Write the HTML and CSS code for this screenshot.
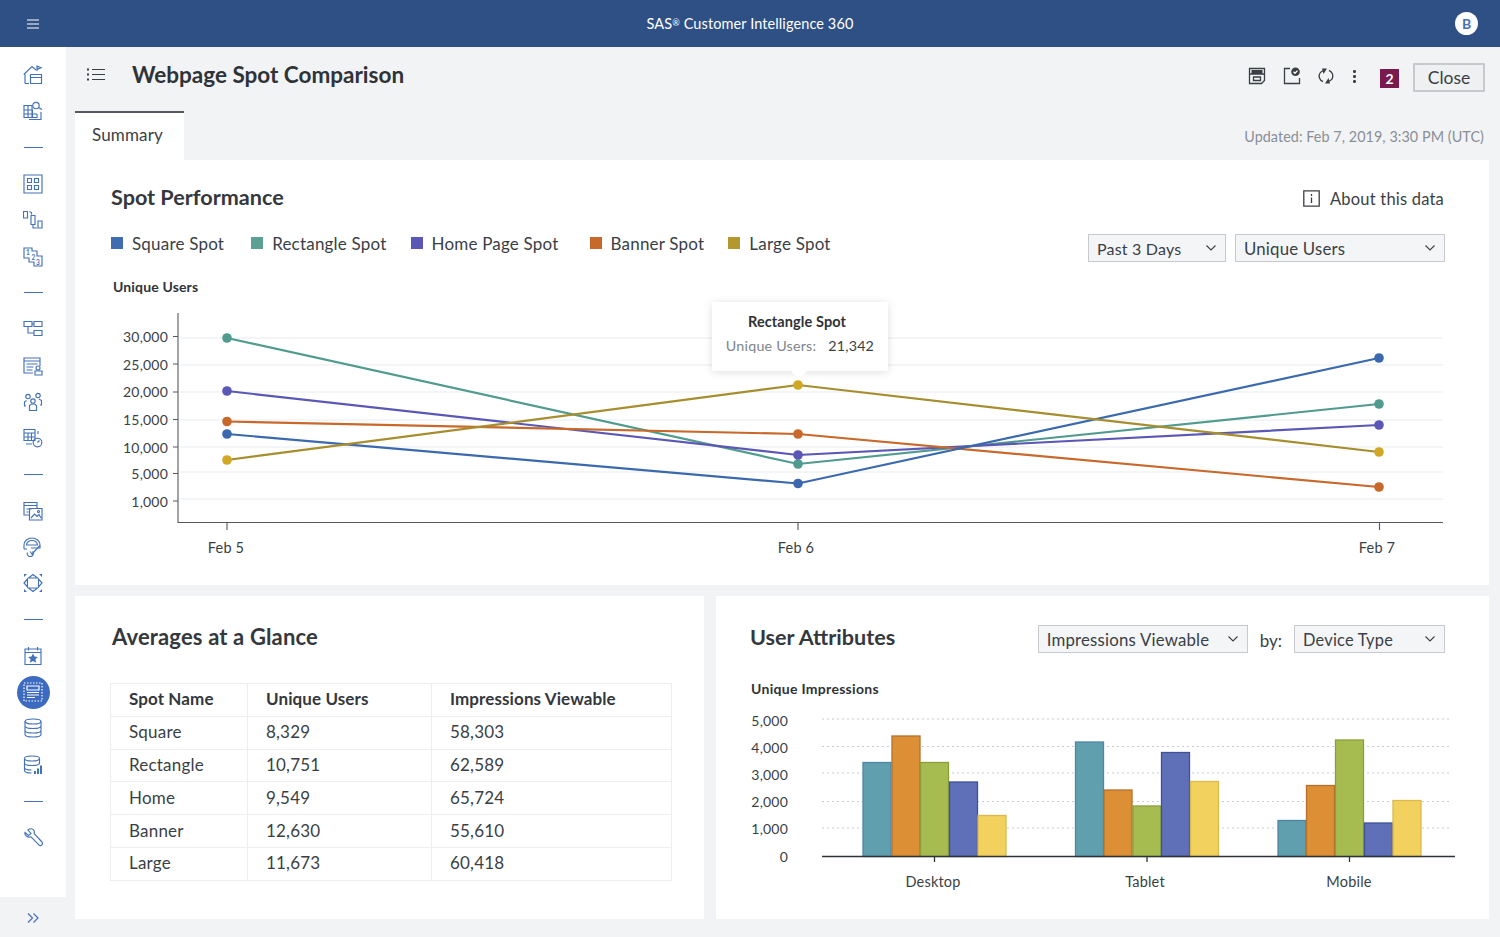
FILE: index.html
```html
<!DOCTYPE html>
<html lang="en">
<head>
<meta charset="utf-8">
<title>Webpage Spot Comparison</title>
<link rel="stylesheet" href="styles.css">
</head>
<body>
<div class="app">
  <header class="topbar">
    <div class="burger"><svg width="12" height="10" viewBox="0 0 12 10"><path d="M0 1h12M0 5h12M0 9h12" stroke="#fff" stroke-width="1.2" fill="none"/></svg></div>
    <div class="product">SAS<span class="reg">®</span> Customer Intelligence 360</div>
    <div class="avatar">B</div>
  </header>
  <div class="main">
    <nav class="sidebar">
      <div class="rail">
        <div class="nav-item"><svg class="ico" viewBox="0 0 20 20"><path d="M2 18.500V9.500M.8 9.500L9 1.500l4 3.500M14 6V1.200l4 1.600-4 1.600M2 18.500h4M7.500 9.500h11v9h-11zM7.500 12.500h11"/></svg></div>
        <div class="nav-item"><svg class="ico" viewBox="0 0 20 20"><path d="M1 4.500h8v12H1zM1 9h9M1 13h13M5 4.500v12M9.500 9v7.500M14 13v3.500H1M18 11v7.500H6"/><circle cx="13" cy="4.500" r="3.200"/><path d="M15.500 6.500l3.500 2"/></svg></div>
        <div class="nav-sep"></div>
        <div class="nav-item"><svg class="ico" viewBox="0 0 20 20"><path d="M1 1h18v18H1zM4.500 4.500h4v4h-4zM11.500 4.500h4v4h-4zM4.500 11.500h4v4h-4zM11.500 11.500h4v4h-4z"/></svg></div>
        <div class="nav-item"><svg class="ico" viewBox="0 0 20 20"><path d="M.500 1.500h4v6.500h-4zM8 5.500h4v9H8zM15 11h4v7h-4zM6.500 1.500l2 1v2M10 15v3h4"/></svg></div>
        <div class="nav-item"><svg class="ico" viewBox="0 0 20 20"><path d="M1 1h8v3h5v5h5v10h-8v-4H6v-4H1z"/><text class="ico-num" x="3" y="8">1</text><text class="ico-num" x="8.500" y="13">2</text><text class="ico-num" x="13" y="18">3</text></svg></div>
        <div class="nav-sep"></div>
        <div class="nav-item"><svg class="ico" viewBox="0 0 20 20"><path d="M1 2.500h8v5H1zM11 2.500h8v5h-8zM11 11.500h8v5h-8zM9 5h2M5 7.500V14h6"/></svg></div>
        <div class="nav-item"><svg class="ico" viewBox="0 0 20 20"><path d="M10 17H1V2h16v8M1 5h16M3.500 8h11M3.500 11h7M3.500 14h6"/><circle cx="15" cy="12" r="2"/><path d="M12 19v-4h7v4z"/></svg></div>
        <div class="nav-item"><svg class="ico" viewBox="0 0 20 20"><circle cx="5" cy="4.500" r="2.200"/><circle cx="15" cy="3.500" r="2.200"/><circle cx="10" cy="9" r="2.200"/><path d="M3 14H1.500V10l2-1.500M17 13h1.500V8.500L16 7M6.500 18.500v-5l2-1.500h3l2 1.500v5z"/></svg></div>
        <div class="nav-item"><svg class="ico" viewBox="0 0 20 20"><path d="M1 1.500h11v11H1zM1 5h11M5 5v7.500M8.500 5v7.500M1 9h11M15 3v3M3 16h6"/><circle cx="14.500" cy="14.500" r="4.300"/><path d="M14.500 14.500l2-2"/></svg></div>
        <div class="nav-sep"></div>
        <div class="nav-item"><svg class="ico" viewBox="0 0 20 20"><path d="M6 14H1V1.500h13V7M1 4.500h13M3.500 8h5M3.500 11h2M6.500 7.500H19V19H6.500zM8 17l3.500-4 2.500 2.500 2-2 2 3.500"/><circle cx="15.500" cy="10.500" r="1"/></svg></div>
        <div class="nav-item"><svg class="ico" viewBox="0 0 20 20"><path d="M1 12V8a8 7 0 0 1 16 0v3H8M1 12h3M3.500 8a5.500 4.500 0 0 1 11 0z"/><path d="M4.500 15.500a3 3 0 1 0 5-1M7 14.500l2 2.500 8-8.500"/></svg></div>
        <div class="nav-item"><svg class="ico" viewBox="0 0 20 20"><path d="M10 1.500L5.500 5h9zM10 18.500L5.500 15h9zM1 10l3.500-4v8zM19 10l-3.500-4v8z"/><path class="ico-fill" d="M1 1h3L1 4zM19 1h-3l3 3zM1 19h3l-3-3zM19 19h-3l3-3z"/></svg></div>
        <div class="nav-sep"></div>
        <div class="nav-item"><svg class="ico" viewBox="0 0 20 20"><path d="M2 3h16v15.500H2zM2 6.500h16M5.500 1v3.500M14.500 1v3.500"/><path class="ico-fill" d="M10 7.500l1.500 3.100 3.400.4-2.500 2.300.7 3.400-3.100-1.700-3.100 1.700.7-3.400L5.100 11l3.400-.4z"/></svg></div>
        <div class="nav-item nav-active"><div class="disc"><svg class="ico-white" width="20" height="20" viewBox="0 0 20 20"><path class="dotted" d="M1 1h18v18H1z"/><path d="M4 4h12v4H4zM4 10.500h12M4 13h12M4 15.500h8"/></svg></div></div>
        <div class="nav-item"><svg class="ico" viewBox="0 0 20 20"><ellipse cx="10" cy="3.500" rx="8" ry="2.500"/><path d="M2 3.500v13c0 1.400 3.600 2.500 8 2.500s8-1.100 8-2.500v-13M2 8c0 1.400 3.600 2.500 8 2.500s8-1.100 8-2.500M2 12.500c0 1.400 3.600 2.500 8 2.500s8-1.100 8-2.500"/></svg></div>
        <div class="nav-item"><svg class="ico" viewBox="0 0 20 20"><ellipse cx="9" cy="3.500" rx="7.500" ry="2.500"/><path d="M1.500 3.500v12c0 1.400 3 2.500 7 2.500M16.500 3.500V9M1.500 8c0 1.400 3.400 2.500 7.500 2.500s7.500-1.100 7.500-2.500M1.500 12.500c0 1.400 3 2.500 7 2.500"/><path class="ico-fill" d="M11 16h2v3h-2zM14 13.500h2V19h-2zM17 10.500h2V19h-2z"/></svg></div>
        <div class="nav-sep"></div>
        <div class="nav-item"><svg class="ico" viewBox="0 0 20 20"><path d="M2 5.500L5.500 8.500 8 6.500 5 3C7 1 10 1.500 11 3.500c.6 1.200.4 2.500.2 3.200l7.800 8.300c.8 1 .6 2-.2 2.900-.9.800-2 .9-2.900 0L8 9.800C6.500 10.300 4.500 10 3.200 9 2 8 1.700 6.700 2 5.500z"/></svg></div>
      </div>
      <div class="expand"><svg width="12" height="10" viewBox="0 0 12 10"><path d="M1 .5l4.500 4.500L1 9.500M6.500 .5L11 5l-4.500 4.500" fill="none" stroke="#4472b8" stroke-width="1.200"/></svg></div>
    </nav>
    <main class="content">
      <div class="page-head">
        <div class="outline-btn"><svg width="18" height="13" viewBox="0 0 18 13"><path d="M5 1.500h13M5 6.500h13M5 11.500h13" stroke="#3a3f45" stroke-width="1.200" fill="none"/><path d="M0 .5h2v2H0zM0 5.500h2v2H0zM0 10.500h2v2H0z" fill="#3a3f45"/></svg></div>
        <h1 class="page-title">Webpage Spot Comparison</h1>
        <div class="actions">
          <svg class="act act-save" viewBox="0 0 18 18"><path d="M1.500 1.500h15v12l-3 3h-12zM1.500 7h15"/><path class="act-fill" d="M3.500 3h11v4h-11z"/><path d="M5.500 10h7v3.500h-7z"/></svg>
          <svg class="act act-check" viewBox="0 0 18 18"><path d="M7 1.500H1.500v15h15V11"/><circle class="act-fill" cx="12.500" cy="4.800" r="4.300"/><path class="act-tick" d="M10.500 4.800l1.500 1.500 2.500-2.700"/></svg>
          <svg class="act act-sync" viewBox="0 0 18 18"><path d="M6.500 3.500C3 5 1.500 8 2.500 11c.6 1.800 2 3 3.500 3.700M11.500 14.500c3.500-1.500 5-4.500 4-7.500-.6-1.800-2-3-3.500-3.700"/><path class="act-fill" d="M10 1.500L6.500 7 5 1.500zM8 16.500l3.500-5.500 1.500 5.500z"/></svg>
          <div class="kebab"><i></i><i></i><i></i></div>
          <div class="badge">2</div>
          <button class="close-btn">Close</button>
        </div>
      </div>
      <div class="tabs">
        <div class="tab">Summary</div>
        <div class="updated">Updated: Feb 7, 2019, 3:30 PM (UTC)</div>
      </div>

      <section class="card perf">
        <div class="perf-head">
          <h2 class="card-title">Spot Performance</h2>
          <div class="about"><svg width="17" height="17" viewBox="0 0 17 17"><path d="M.8.800h15.400v15.400H.8zM8.500 7.500V13M8.500 4v2" fill="none" stroke="#3a3f45" stroke-width="1.300"/></svg><span>About this data</span></div>
        </div>
        <div class="perf-controls">
          <ul class="legend">
            <li class="lg"><i class="sw sw-blue"></i>Square Spot</li>
            <li class="lg"><i class="sw sw-teal"></i>Rectangle Spot</li>
            <li class="lg"><i class="sw sw-purple"></i>Home Page Spot</li>
            <li class="lg"><i class="sw sw-orange"></i>Banner Spot</li>
            <li class="lg"><i class="sw sw-gold"></i>Large Spot</li>
          </ul>
          <div class="select sel-days">Past 3 Days<svg class="chev" viewBox="0 0 10 6"><path d="M.5.500L5 5 9.500.500"/></svg></div>
          <div class="select sel-users">Unique Users<svg class="chev" viewBox="0 0 10 6"><path d="M.5.500L5 5 9.500.500"/></svg></div>
        </div>
        <div class="axis-title perf-axis">Unique Users</div>
        <div class="line-wrap">
          <svg class="line-chart" width="1414" height="285" viewBox="75 300 1414 285">
            <g class="grid">
              <path d="M180 338H1443M180 365H1443M180 392H1443M180 420H1443M180 447H1443M180 472H1443M180 499H1443"/>
            </g>
            <g class="axis">
              <path d="M178 313V522.500H1443M173 336.500h5M173 364h5M173 392h5M173 419.500h5M173 447h5M173 473.500h5M173 501h5M227 522v8M798 522v8M1379.500 522v8"/>
            </g>
            <g class="ylab">
              <text x="168" y="342">30,000</text>
              <text x="168" y="370">25,000</text>
              <text x="168" y="397">20,000</text>
              <text x="168" y="425">15,000</text>
              <text x="168" y="453">10,000</text>
              <text x="168" y="479">5,000</text>
              <text x="168" y="507">1,000</text>
            </g>
            <g class="xlab">
              <text x="226" y="553">Feb 5</text>
              <text x="796" y="553">Feb 6</text>
              <text x="1377" y="553">Feb 7</text>
            </g>
            <polyline class="ln ln-teal" points="227,338 798,464 1379,404"/>
            <polyline class="ln ln-purple" points="227,391 798,455 1379,425"/>
            <polyline class="ln ln-orange" points="227,421.5 798,434 1379,487"/>
            <polyline class="ln ln-blue" points="227,434 798,483.5 1379,358"/>
            <polyline class="ln ln-gold" points="227,460 798,385 1379,452"/>
            <g class="dots-teal"><circle cx="227" cy="338" r="4.800"/><circle cx="798" cy="464" r="4.800"/><circle cx="1379" cy="404" r="4.800"/></g>
            <g class="dots-purple"><circle cx="227" cy="391" r="4.800"/><circle cx="798" cy="455" r="4.800"/><circle cx="1379" cy="425" r="4.800"/></g>
            <g class="dots-orange"><circle cx="227" cy="421.500" r="4.800"/><circle cx="798" cy="434" r="4.800"/><circle cx="1379" cy="487" r="4.800"/></g>
            <g class="dots-blue"><circle cx="227" cy="434" r="4.800"/><circle cx="798" cy="483.500" r="4.800"/><circle cx="1379" cy="358" r="4.800"/></g>
            <g class="dots-gold"><circle cx="227" cy="460" r="4.800"/><circle cx="798" cy="385" r="4.800"/><circle cx="1379" cy="452" r="4.800"/></g>
          </svg>
          <div class="tooltip">
            <div class="tt-title">Rectangle Spot</div>
            <div class="tt-row"><span class="tt-key">Unique Users:</span><span class="tt-val">21,342</span></div>
          </div>
        </div>
      </section>

      <div class="lower">
        <section class="card glance">
          <h2 class="card-title glance-title">Averages at a Glance</h2>
          <table class="avg">
            <thead><tr><th>Spot Name</th><th>Unique Users</th><th>Impressions Viewable</th></tr></thead>
            <tbody>
              <tr><td>Square</td><td>8,329</td><td>58,303</td></tr>
              <tr><td>Rectangle</td><td>10,751</td><td>62,589</td></tr>
              <tr><td>Home</td><td>9,549</td><td>65,724</td></tr>
              <tr><td>Banner</td><td>12,630</td><td>55,610</td></tr>
              <tr><td>Large</td><td>11,673</td><td>60,418</td></tr>
            </tbody>
          </table>
        </section>
        <section class="card attrs">
          <div class="attrs-head">
            <h2 class="card-title">User Attributes</h2>
            <div class="select sel-imp">Impressions Viewable<svg class="chev" viewBox="0 0 10 6"><path d="M.5.500L5 5 9.500.500"/></svg></div>
            <span class="by">by:</span>
            <div class="select sel-dev">Device Type<svg class="chev" viewBox="0 0 10 6"><path d="M.5.500L5 5 9.500.500"/></svg></div>
          </div>
          <div class="axis-title attrs-axis">Unique Impressions</div>
          <svg class="bar-chart" width="773" height="225" viewBox="716 695 773 225">
            <path class="dotgrid" d="M822 719H1450M822 746.500H1450M822 773H1450M822 801.500H1450M822 828H1450"/>
            <g class="ylab">
              <text x="788" y="726">5,000</text>
              <text x="788" y="753">4,000</text>
              <text x="788" y="780">3,000</text>
              <text x="788" y="807">2,000</text>
              <text x="788" y="834">1,000</text>
              <text x="788" y="862">0</text>
            </g>
            <g class="b-teal"><rect x="863" y="762.500" width="28" height="94"/><rect x="1075.500" y="742" width="28" height="114.500"/><rect x="1278" y="820.500" width="28" height="36"/></g>
            <g class="b-orange"><rect x="892" y="736" width="28" height="120.500"/><rect x="1104" y="790" width="28" height="66.500"/><rect x="1306.500" y="785.500" width="28" height="71"/></g>
            <g class="b-green"><rect x="920.500" y="762.500" width="28" height="94"/><rect x="1133" y="806" width="28" height="50.500"/><rect x="1335.500" y="740" width="28" height="116.500"/></g>
            <g class="b-blue"><rect x="949.500" y="782" width="28" height="74.500"/><rect x="1161.500" y="752.500" width="28" height="104"/><rect x="1364.500" y="823" width="28" height="33.500"/></g>
            <g class="b-yellow"><rect x="978" y="815.500" width="28" height="41"/><rect x="1190.500" y="781.500" width="28" height="75"/><rect x="1393" y="800.500" width="28" height="56"/></g>
            <path class="bar-axis" d="M822 856.500H1455M934.500 857v5M1147 857v5M1349.500 857v5"/>
            <g class="xlab">
              <text x="933" y="887">Desktop</text>
              <text x="1145" y="887">Tablet</text>
              <text x="1349" y="887">Mobile</text>
            </g>
          </svg>
        </section>
      </div>
    </main>
  </div>
</div>
</body>
</html>
```

FILE: styles.css
```css
* { box-sizing: border-box; }
html, body { margin: 0; padding: 0; }
body { font-family: "Lato", "Open Sans", sans-serif; color: #3a3f45; background: #f2f3f5; }
.app { width: 1500px; height: 937px; display: flex; flex-direction: column; overflow: hidden; }

/* top bar */
.topbar { height: 47px; flex: none; background: #2f5085; display: flex; align-items: center; padding: 0 22px 0 27px; color: #fff; }
.burger { width: 12px; display: flex; }
.product { flex: 1; text-align: center; font-size: 14.500px; line-height: 46px; letter-spacing: .1px; padding-left: 6px; }
.reg { font-size: 9px; vertical-align: 3px; }
.avatar { width: 23px; height: 23px; border-radius: 50%; background: #fff; color: #4472b8; font-size: 14px; font-weight: 700; display: flex; align-items: center; justify-content: center; }

.main { flex: 1; display: flex; min-height: 0; }

/* sidebar */
.sidebar { width: 66px; flex: none; background: #fff; display: flex; flex-direction: column; }
.rail { padding-top: 10px; flex: 1; }
.nav-item { height: 36.3px; display: flex; align-items: center; justify-content: center; }
.nav-sep { height: 36.3px; display: flex; align-items: center; justify-content: center; }
.nav-sep::before { content: ""; width: 19px; height: 1px; background: #4472b8; }
.ico { width: 20px; height: 20px; fill: none; stroke: #4472b8; stroke-width: 1.15; }
.ico-fill { fill: #4472b8; stroke: none; }
.ico-num { font: 700 6.5px "Lato", sans-serif; fill: #4472b8; stroke: none; }
.disc { width: 33px; height: 33px; border-radius: 50%; background: #3c6bc0; display: flex; align-items: center; justify-content: center; }
.ico-white { fill: none; stroke: #fff; stroke-width: 1.2; }
.dotted { stroke-dasharray: 1.5 1.5; }
.expand { height: 40px; flex: none; background: #f2f3f5; display: flex; align-items: center; justify-content: center; padding-top: 2px; }

/* content */
.content { flex: 1; padding: 0 11px 0 9px; min-width: 0; }
.page-head { height: 64px; display: flex; align-items: flex-start; }
.outline-btn { width: 18px; margin: 21px 0 0 12px; display: flex; }
.page-title { margin: 13px 0 0 27px; font-size: 22.5px; line-height: 30px; font-weight: 700; color: #2f3338; }
.actions { margin-left: auto; margin-right: 4px; display: flex; align-items: flex-start; padding-top: 17px; }
.act { width: 18px; height: 18px; fill: none; stroke: #3a3f45; stroke-width: 1.3; margin-top: 3px; }
.act-fill { fill: #3a3f45; stroke: none; }
.act-tick { stroke: #fff; }
.act-check { margin-left: 17px; }
.act-sync { margin-left: 16px; }
.kebab { width: 3px; margin: 6px 0 0 18px; display: flex; flex-direction: column; gap: 2.500px; }
.kebab i { width: 2.500px; height: 2.500px; background: #3a3f45; border-radius: 50%; }
.badge { width: 19px; height: 19px; margin: 5px 0 0 24px; background: #7a1a4f; color: #fff; font-size: 14px; font-weight: 700; text-align: center; line-height: 19px; }
.close-btn { width: 72px; height: 29px; margin: -1px 0 0 14px; background: #eef0f2; border: 2px solid #c6c9cd; border-radius: 1px; color: #3a3f45; font: 400 17.5px "Lato", sans-serif; padding: 0; }

.tabs { height: 49px; display: flex; align-items: stretch; justify-content: space-between; }
.tab { width: 109px; background: #fff; border-top: 2px solid #55595f; font-size: 17px; line-height: 44px; padding-left: 17px; color: #3a3f45; letter-spacing: .15px; }
.updated { font-size: 14.400px; color: #8a8f96; line-height: 52px; padding-right: 5px; letter-spacing: .05px; }

.card { background: #fff; }
.card-title { margin: 0; font-size: 21.600px; line-height: 30px; font-weight: 700; color: #34383d; }

.perf { height: 425px; position: relative; }
.perf-head { display: flex; justify-content: space-between; align-items: center; padding: 22px 45px 0 36px; }
.about { display: flex; align-items: center; gap: 10px; font-size: 16.500px; letter-spacing: .2px; padding-top: 3px; }
.perf-controls { display: flex; align-items: center; padding: 22px 44px 0 36px; }
.legend { list-style: none; display: flex; margin: 0; padding: 0; flex: 1; font-size: 17px; letter-spacing: .2px; }
.lg { display: flex; align-items: center; gap: 9px; margin-right: 27px; position: relative; top: -5px; }
.lg:nth-child(2) { margin-right: 24px; }
.lg:nth-child(3) { margin-right: 31px; }
.lg:nth-child(4) { margin-right: 24px; }
.sw { width: 12px; height: 12px; display: block; }
.sw-blue { background: #3f6cb0; }
.sw-teal { background: #5aa193; }
.sw-purple { background: #5b57b5; }
.sw-orange { background: #c8692c; }
.sw-gold { background: #b3972f; }

.select { height: 28px; background: #f4f5f7; border: 1.500px solid #c6c9cd; display: flex; align-items: center; justify-content: space-between; font-size: 16.800px; letter-spacing: .2px; padding: 0 9px 0 8px; color: #3a3f45; }
.chev { width: 10px; height: 6px; fill: none; stroke: #3a3f45; stroke-width: 1.100; }
.sel-days { width: 138px; margin-right: 9px; font-size: 16px; }
.sel-users { width: 210px; }
.axis-title { font-size: 14px; font-weight: 700; color: #2f3338; letter-spacing: .15px; }
.perf-axis { padding: 15px 0 0 38px; line-height: 20px; }

.line-wrap { position: absolute; left: 0; top: 140px; width: 1414px; height: 285px; }
.line-chart { display: block; }
.grid path { stroke: #e9ebee; stroke-width: 1; fill: none; }
.axis path { stroke: #55595f; stroke-width: 1.100; fill: none; }
.ylab text { font-size: 14px; fill: #3a3f45; text-anchor: end; letter-spacing: .2px; }
.xlab text { font-size: 14.500px; fill: #3a3f45; text-anchor: middle; letter-spacing: .2px; }
.ln { fill: none; stroke-width: 2.200; }
.ln-teal { stroke: #509b8d; }
.ln-purple { stroke: #5b57b5; }
.ln-orange { stroke: #c8682a; }
.ln-blue { stroke: #3b69ad; }
.ln-gold { stroke: #a68d2e; }
.dots-teal { fill: #509b8d; }
.dots-purple { fill: #5b57b5; }
.dots-orange { fill: #c8682a; }
.dots-blue { fill: #3b69ad; }
.dots-gold { fill: #d0a826; }

.tooltip { position: absolute; left: 637px; top: 2px; width: 176px; height: 69px; background: #fff; box-shadow: 0 1px 8px rgba(40, 50, 60, .16); text-align: center; padding-top: 10px; }
.tooltip::after { content: ""; position: absolute; left: 79px; bottom: -8px; border-left: 8px solid transparent; border-right: 8px solid transparent; border-top: 8px solid #fff; }
.tt-title { font-size: 14.500px; line-height: 20px; font-weight: 700; color: #2f3338; letter-spacing: .1px; padding-right: 6px; }
.tt-row { display: flex; justify-content: center; gap: 12px; font-size: 14.300px; line-height: 20px; margin-top: 4px; letter-spacing: .2px; }
.tt-key { color: #80858c; }

.lower { display: flex; gap: 12px; margin-top: 11px; height: 323px; }
.glance { width: 629px; padding: 26px 33px 0 35px; }
.glance-title { padding-left: 2px; font-size: 22px; letter-spacing: .15px; }
.avg { width: 562px; margin-top: 31px; border-collapse: collapse; font-size: 17px; letter-spacing: .2px; table-layout: fixed; }
.avg th, .avg td { height: 32.800px; padding: 0 0 2px 18px; border: 1px solid #eceef0; text-align: left; font-weight: 400; color: #3a3f45; }
.avg th { font-weight: 700; font-size: 17px; color: #34383d; letter-spacing: .1px; padding-bottom: 3px; }
.avg th:nth-child(1) { width: 137px; }
.avg th:nth-child(2) { width: 184px; }

.attrs { flex: 1; position: relative; }
.attrs-head { display: flex; align-items: flex-start; padding: 26px 44px 0 34px; }
.attrs-head .card-title { flex: 1; }
.sel-imp { width: 210px; margin-top: 3px; }
.by { margin: 4px 12px 0 12px; font-size: 17px; line-height: 30px; }
.sel-dev { width: 151px; margin-top: 3px; font-size: 16.400px; }
.attrs-axis { padding: 23px 0 0 35px; line-height: 20px; letter-spacing: .3px; }
.bar-chart { position: absolute; left: 0; top: 99px; display: block; }
.dotgrid { stroke: #c9ccd0; stroke-width: 1; stroke-dasharray: 2 3; fill: none; }
.bar-axis { stroke: #2f3338; stroke-width: 1.300; fill: none; }
.b-teal rect, .b-orange rect, .b-green rect, .b-blue rect, .b-yellow rect { stroke-width: 1.300; }
.b-teal rect { fill: #5f9fae; stroke: #4f86a8; }
.b-orange rect { fill: #dc8f35; stroke: #b5702b; }
.b-green rect { fill: #a7bc50; stroke: #8a9e3a; }
.b-blue rect { fill: #5f70b8; stroke: #3f5296; }
.b-yellow rect { fill: #f2d15e; stroke: #dcb94c; }
```
